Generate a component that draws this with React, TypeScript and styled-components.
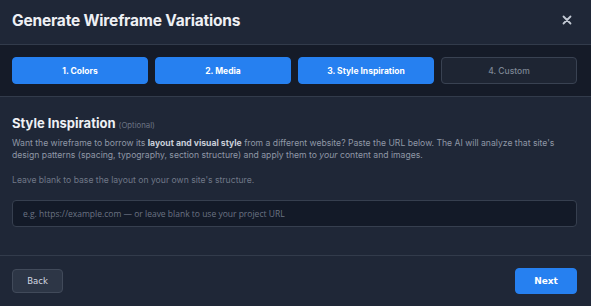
import React from 'react';
import styled, { createGlobalStyle } from 'styled-components';

const GlobalStyle = createGlobalStyle`
  html, body {
    margin: 0;
    padding: 0;
    background: #1f2737;
  }
  * {
    box-sizing: border-box;
  }
`;

const Modal = styled.div`
  width: 591px;
  height: 306px;
  display: flex;
  flex-direction: column;
  background: #1f2737;
  font-family: Inter, 'Noto Sans', sans-serif;
  color: #e5e7eb;
  overflow: hidden;
`;

const Header = styled.header`
  height: 45px;
  display: flex;
  align-items: center;
  justify-content: space-between;
  padding: 0 16px 4px 12px;
  border-bottom: 1px solid #323b4b;
`;

const Title = styled.h1`
  margin: 0;
  font-size: 15.5px;
  font-weight: 700;
  letter-spacing: -0.2px;
  color: #eef0f4;
`;

const CloseButton = styled.button`
  width: 16px;
  height: 16px;
  padding: 0;
  border: none;
  background: transparent;
  color: #c3c9d4;
  display: flex;
  align-items: center;
  justify-content: center;
  cursor: pointer;
`;

const Steps = styled.nav`
  height: 52px;
  display: grid;
  grid-template-columns: repeat(4, 1fr);
  gap: 7px;
  align-items: center;
  padding: 0 14px 0 12px;
  background: #151b28;
  border-bottom: 1px solid #323b4b;
`;

const Step = styled.button<{ active?: boolean }>`
  height: 27px;
  border-radius: 4px;
  font-family: Inter, 'Noto Sans', sans-serif;
  font-size: 8.5px;
  font-weight: ${p => (p.active ? 700 : 500)};
  color: ${p => (p.active ? '#ffffff' : '#7d8594')};
  background: ${p => (p.active ? '#2680f0' : '#1e2533')};
  border: 1px solid ${p => (p.active ? '#2680f0' : '#394252')};
  cursor: pointer;
`;

const Body = styled.section`
  flex: 1;
  padding: 18px 14px 0 12px;
  border-bottom: 1px solid #323b4b;
`;

const SectionTitle = styled.h2`
  margin: 0;
  font-size: 13px;
  font-weight: 700;
  color: #eef0f4;
  display: flex;
  align-items: baseline;
  gap: 3px;
`;

const Optional = styled.span`
  font-size: 7.8px;
  font-weight: 400;
  color: #6b7383;
`;

const Text = styled.p<{ muted?: boolean }>`
  margin: ${p => (p.muted ? '13px 0 0' : '6px 0 0')};
  font-size: 8.65px;
  line-height: 12px;
  color: ${p => (p.muted ? '#6f7787' : '#8f97a6')};

  strong {
    font-weight: 700;
    color: #c9ced8;
  }
`;

const UrlInput = styled.input`
  display: block;
  width: 100%;
  height: 27px;
  margin-top: 14px;
  padding: 0 10px;
  border-radius: 4px;
  border: 1px solid #363f4f;
  background: #131a28;
  color: #e5e7eb;
  font-family: 'Open Sans', 'Noto Sans', sans-serif;
  font-size: 8.5px;
  outline: none;

  &::placeholder {
    color: #6b7383;
  }
`;

const Footer = styled.footer`
  height: 50px;
  display: flex;
  align-items: center;
  justify-content: space-between;
  padding: 0 14px 0 12px;
`;

const FooterButton = styled.button<{ primary?: boolean }>`
  height: ${p => (p.primary ? '26px' : '24px')};
  min-width: ${p => (p.primary ? '62px' : '51px')};
  padding: 0 14px;
  border-radius: 4px;
  font-family: Tahoma, 'DejaVu Sans', sans-serif;
  font-size: ${p => (p.primary ? '9px' : '8.5px')};
  font-weight: ${p => (p.primary ? 700 : 400)};
  color: ${p => (p.primary ? '#ffffff' : '#d4d9e1')};
  background: ${p => (p.primary ? '#2680f0' : '#2d3646')};
  border: 1px solid ${p => (p.primary ? '#2680f0' : '#414a5a')};
  cursor: pointer;
`;

const steps = ['1. Colors', '2. Media', '3. Style Inspiration', '4. Custom'];
const current = 2;

export default function App() {
  return (
    <>
      <GlobalStyle />
      <Modal>
        <Header>
          <Title>Generate Wireframe Variations</Title>
          <CloseButton aria-label="Close">
            <svg width="10" height="10" viewBox="0 0 10 10">
              <path d="M1.5 1.5 L8.5 8.5 M8.5 1.5 L1.5 8.5" stroke="currentColor" strokeWidth="1.8" strokeLinecap="round" />
            </svg>
          </CloseButton>
        </Header>
        <Steps>
          {steps.map((s, i) => (
            <Step key={s} active={i <= current}>
              {s}
            </Step>
          ))}
        </Steps>
        <Body>
          <SectionTitle>
            Style Inspiration <Optional>(Optional)</Optional>
          </SectionTitle>
          <Text>
            Want the wireframe to borrow its <strong>layout and visual style</strong> from a different website? Paste the URL below. The AI will analyze that site's design patterns (spacing, typography, section structure) and apply them to <em>your</em> content and images.
          </Text>
          <Text muted>Leave blank to base the layout on your own site's structure.</Text>
          <UrlInput placeholder="e.g. https://example.com — or leave blank to use your project URL" />
        </Body>
        <Footer>
          <FooterButton>Back</FooterButton>
          <FooterButton primary>Next</FooterButton>
        </Footer>
      </Modal>
    </>
  );
}
